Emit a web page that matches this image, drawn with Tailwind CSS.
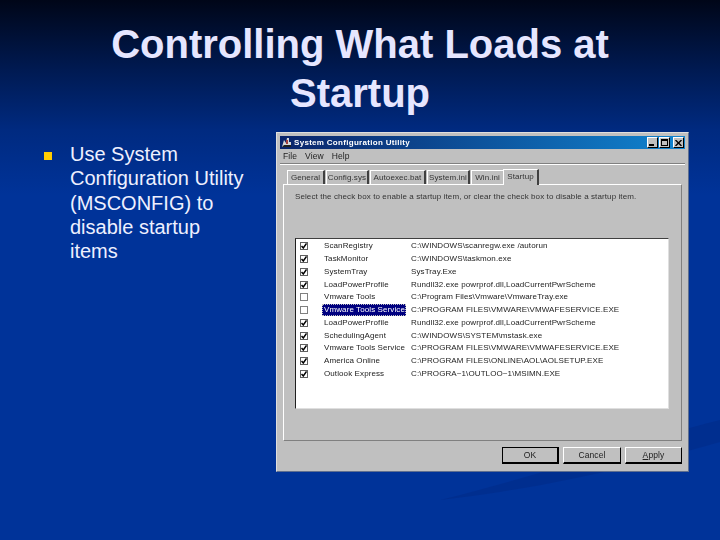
<!DOCTYPE html>
<html>
<head>
<meta charset="utf-8">
<script src="https://cdn.jsdelivr.net/npm/@tailwindcss/browser@4"></script>
</head>
<body class="m-0">
<div class="relative w-[720px] h-[540px] overflow-hidden bg-[linear-gradient(to_bottom,#000618_0px,#001a52_70px,#002a80_130px,#003399_195px,#003399_540px)] font-['Liberation_Sans',Arial,sans-serif]">
  <svg class="absolute left-0 top-0" width="720" height="540" viewBox="0 0 720 540"><path d="M720 420 C640 440 560 470 440 500 C560 486 650 462 720 442 Z" fill="#002a85" opacity="0.5"/></svg>
  <div class="relative flex flex-col">
    <h1 class="m-0 pt-[20px] text-center text-[40px] leading-[49px] font-bold text-[#e6e6ff]">Controlling What Loads at<br>Startup</h1>
    <div class="flex items-start pt-[14px]">
      <div class="w-[276px] flex items-start pl-[44px] pt-[10px] shrink-0">
        <div class="w-[8px] h-[8px] mt-[10px] bg-[#ffcc00] shrink-0"></div>
        <p class="m-0 ml-[18px] w-[178px] text-[20px] leading-[24.3px] text-[#eef0ff]">Use System Configuration Utility (MSCONFIG) to disable startup items</p>
      </div>
      <!-- dialog -->
      <div class="w-[413px] h-[340px] shrink-0 flex flex-col bg-[#c0c0c0] border border-t-[#dfdfdf] border-l-[#dfdfdf] border-r-[#5f6f8f] border-b-[#5f6f8f] px-[3px] pt-[3px] text-[8px] tracking-[0.1px] text-black [&_span]:blur-[0.3px] [&_p]:blur-[0.3px]">
        <div class="h-[13px] flex items-center justify-between bg-[linear-gradient(to_right,#0a246a,#1084d0)] pl-[1px] pr-[1px] shrink-0">
          <div class="flex items-center gap-[2px]">
            <svg width="11" height="11" viewBox="0 0 11 11"><path d="M1 10 L3 3 L5 6 L6 1 L8 1 L8 5 L10 5 L10 10 Z" fill="#d8d8d8"/><path d="M1 10 L10 10 L10 8 L3 8 Z" fill="#202020"/><rect x="5" y="3" width="2" height="4" fill="#a04040"/></svg>
            <span class="text-white font-bold text-[8px] tracking-[0.3px] leading-none">System Configuration Utility</span>
          </div>
          <div class="flex items-center">
            <div class="w-[11px] h-[11px] bg-[#c0c0c0] border border-t-white border-l-white border-r-black border-b-black flex items-end pl-[1px] pb-[1px]"><div class="w-[5px] h-[2px] bg-black"></div></div>
            <div class="ml-[1px] w-[11px] h-[11px] bg-[#c0c0c0] border border-t-white border-l-white border-r-black border-b-black p-[1px]"><div class="w-full h-full border border-t-2 border-black"></div></div>
            <div class="ml-[3px] w-[11px] h-[11px] bg-[#c0c0c0] border border-t-white border-l-white border-r-black border-b-black flex items-center justify-center"><svg width="7" height="6" viewBox="0 0 7 6"><path d="M0.5 0 L6.5 6 M6.5 0 L0.5 6" stroke="#000" stroke-width="1.4"/></svg></div>
          </div>
        </div>
        <div class="h-[14px] flex items-center gap-[8px] pl-[3px] shrink-0 text-[8.5px] text-[#222]"><span>File</span><span>View</span><span>Help</span></div>
        <div class="h-[2px] border-t border-[#808080] border-b-white border-b bg-[#c0c0c0] shrink-0"></div>
        <div class="flex items-end h-[19px] pl-[7px] shrink-0 text-[#333]">
          <div class="w-[38px] h-[14px] bg-[#c0c0c0] border-t border-l border-white border-r-2 border-r-[#404040] text-center leading-[13px]"><span>General</span></div>
          <div class="ml-[1px] w-[43px] h-[14px] bg-[#c0c0c0] border-t border-l border-white border-r-2 border-r-[#404040] text-center leading-[13px]"><span>Config.sys</span></div>
          <div class="ml-[1px] w-[56px] h-[14px] bg-[#c0c0c0] border-t border-l border-white border-r-2 border-r-[#404040] text-center leading-[13px]"><span>Autoexec.bat</span></div>
          <div class="ml-[1px] w-[43px] h-[14px] bg-[#c0c0c0] border-t border-l border-white border-r-2 border-r-[#404040] text-center leading-[13px]"><span>System.ini</span></div>
          <div class="ml-[1px] w-[32px] h-[14px] bg-[#c0c0c0] border-t border-l border-white text-center leading-[13px]"><span>Win.ini</span></div>
          <div class="relative z-10 -mb-[1px] w-[36px] h-[16px] bg-[#c0c0c0] border-t border-l border-white border-r-2 border-r-[#404040] text-center leading-[13px]"><span>Startup</span></div>
        </div>
        <div class="ml-[3px] w-[399px] h-[257px] shrink-0 border border-t-white border-l-white border-r-[#808080] border-b-[#808080] flex flex-col pl-[11px] pt-[7px]">
          <p class="m-0 h-[46px] shrink-0 leading-[10px] text-[#333]">Select the check box to enable a startup item, or clear the check box to disable a startup item.</p>
          <div class="w-[374px] h-[171px] bg-white border border-t-[#404040] border-l-[#202020] border-r-[#dfdfdf] border-b-[#dfdfdf] pt-[1px] flex flex-col text-[#222]">
            <div class="h-[12.75px] flex items-center shrink-0"><div class="w-[8px] h-[8px] ml-[4px] border border-[#606060] flex items-center justify-center"><svg width="6" height="6" viewBox="0 0 6 6"><path d="M0.5 3 L2.3 5 L5.5 0.5" fill="none" stroke="#000" stroke-width="1.5"/></svg></div><div class="ml-[15px] w-[88px] pl-[1px]"><span>ScanRegistry</span></div><span class="whitespace-nowrap">C:\WINDOWS\scanregw.exe /autorun</span></div>
            <div class="h-[12.75px] flex items-center shrink-0"><div class="w-[8px] h-[8px] ml-[4px] border border-[#606060] flex items-center justify-center"><svg width="6" height="6" viewBox="0 0 6 6"><path d="M0.5 3 L2.3 5 L5.5 0.5" fill="none" stroke="#000" stroke-width="1.5"/></svg></div><div class="ml-[15px] w-[88px] pl-[1px]"><span>TaskMonitor</span></div><span class="whitespace-nowrap">C:\WINDOWS\taskmon.exe</span></div>
            <div class="h-[12.75px] flex items-center shrink-0"><div class="w-[8px] h-[8px] ml-[4px] border border-[#606060] flex items-center justify-center"><svg width="6" height="6" viewBox="0 0 6 6"><path d="M0.5 3 L2.3 5 L5.5 0.5" fill="none" stroke="#000" stroke-width="1.5"/></svg></div><div class="ml-[15px] w-[88px] pl-[1px]"><span>SystemTray</span></div><span class="whitespace-nowrap">SysTray.Exe</span></div>
            <div class="h-[12.75px] flex items-center shrink-0"><div class="w-[8px] h-[8px] ml-[4px] border border-[#606060] flex items-center justify-center"><svg width="6" height="6" viewBox="0 0 6 6"><path d="M0.5 3 L2.3 5 L5.5 0.5" fill="none" stroke="#000" stroke-width="1.5"/></svg></div><div class="ml-[15px] w-[88px] pl-[1px]"><span>LoadPowerProfile</span></div><span class="whitespace-nowrap">Rundll32.exe powrprof.dll,LoadCurrentPwrScheme</span></div>
            <div class="h-[12.75px] flex items-center shrink-0"><div class="w-[8px] h-[8px] ml-[4px] border border-[#808080]"></div><div class="ml-[15px] w-[88px] pl-[1px]"><span>Vmware Tools</span></div><span class="whitespace-nowrap">C:\Program Files\Vmware\VmwareTray.exe</span></div>
            <div class="h-[12.75px] flex items-center shrink-0"><div class="w-[8px] h-[8px] ml-[4px] border border-[#808080]"></div><div class="ml-[14px] w-[84px] pl-[2px] bg-[#000080] text-white outline-1 outline-dotted outline-[#c0c0c0] -outline-offset-1 leading-[12px] whitespace-nowrap"><span>Vmware Tools Service</span></div><span class="ml-[5px] whitespace-nowrap">C:\PROGRAM FILES\VMWARE\VMWAFESERVICE.EXE</span></div>
            <div class="h-[12.75px] flex items-center shrink-0"><div class="w-[8px] h-[8px] ml-[4px] border border-[#606060] flex items-center justify-center"><svg width="6" height="6" viewBox="0 0 6 6"><path d="M0.5 3 L2.3 5 L5.5 0.5" fill="none" stroke="#000" stroke-width="1.5"/></svg></div><div class="ml-[15px] w-[88px] pl-[1px]"><span>LoadPowerProfile</span></div><span class="whitespace-nowrap">Rundll32.exe powrprof.dll,LoadCurrentPwrScheme</span></div>
            <div class="h-[12.75px] flex items-center shrink-0"><div class="w-[8px] h-[8px] ml-[4px] border border-[#606060] flex items-center justify-center"><svg width="6" height="6" viewBox="0 0 6 6"><path d="M0.5 3 L2.3 5 L5.5 0.5" fill="none" stroke="#000" stroke-width="1.5"/></svg></div><div class="ml-[15px] w-[88px] pl-[1px]"><span>SchedulingAgent</span></div><span class="whitespace-nowrap">C:\WINDOWS\SYSTEM\mstask.exe</span></div>
            <div class="h-[12.75px] flex items-center shrink-0"><div class="w-[8px] h-[8px] ml-[4px] border border-[#606060] flex items-center justify-center"><svg width="6" height="6" viewBox="0 0 6 6"><path d="M0.5 3 L2.3 5 L5.5 0.5" fill="none" stroke="#000" stroke-width="1.5"/></svg></div><div class="ml-[15px] w-[88px] pl-[1px] whitespace-nowrap"><span>Vmware Tools Service</span></div><span class="whitespace-nowrap">C:\PROGRAM FILES\VMWARE\VMWAFESERVICE.EXE</span></div>
            <div class="h-[12.75px] flex items-center shrink-0"><div class="w-[8px] h-[8px] ml-[4px] border border-[#606060] flex items-center justify-center"><svg width="6" height="6" viewBox="0 0 6 6"><path d="M0.5 3 L2.3 5 L5.5 0.5" fill="none" stroke="#000" stroke-width="1.5"/></svg></div><div class="ml-[15px] w-[88px] pl-[1px]"><span>America Online</span></div><span class="whitespace-nowrap">C:\PROGRAM FILES\ONLINE\AOL\AOLSETUP.EXE</span></div>
            <div class="h-[12.75px] flex items-center shrink-0"><div class="w-[8px] h-[8px] ml-[4px] border border-[#606060] flex items-center justify-center"><svg width="6" height="6" viewBox="0 0 6 6"><path d="M0.5 3 L2.3 5 L5.5 0.5" fill="none" stroke="#000" stroke-width="1.5"/></svg></div><div class="ml-[15px] w-[88px] pl-[1px]"><span>Outlook Express</span></div><span class="whitespace-nowrap">C:\PROGRA~1\OUTLOO~1\MSIMN.EXE</span></div>
          </div>
        </div>
        <div class="flex justify-end gap-[4px] pt-[6px] pr-[3px] text-[8.5px] text-[#222]">
          <div class="w-[57px] h-[17px] border border-black border-b-2 border-r-2 text-center leading-[14px]"><span>OK</span></div>
          <div class="w-[58px] h-[17px] border border-t-white border-l-white border-r-black border-b-black border-b-2 text-center leading-[14px]"><span>Cancel</span></div>
          <div class="w-[57px] h-[17px] border border-t-white border-l-white border-r-black border-b-black border-b-2 text-center leading-[14px]"><span class="underline">A</span><span>pply</span></div>
        </div>
      </div>
    </div>
  </div>
</div>
</body>
</html>
